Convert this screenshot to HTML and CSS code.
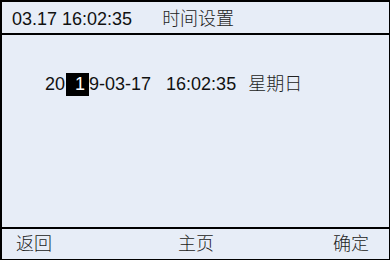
FILE: index.html
```html
<!DOCTYPE html>
<html lang="zh-CN">
<head>
<meta charset="utf-8">
<title>时间设置</title>
<link rel="stylesheet" href="styles.css">
</head>
<body>
<div class="screen">
  <div class="header">
    <span class="clock">03.17 16:02:35</span>
    <span class="title cjk">时间设置</span>
  </div>
  <div class="main">
    <div class="date-row">
      <span class="year">20</span><span class="sel">1</span><span class="rest">9-03-17</span><span class="time">16:02:35</span><span class="week cjk">星期日</span>
    </div>
  </div>
  <div class="footer">
    <span class="btn cjk back">返回</span>
    <span class="btn cjk home">主页</span>
    <span class="btn cjk ok">确定</span>
  </div>
</div>
</body>
</html>
```
FILE: styles.css
```css
html, body {
  margin: 0;
  padding: 0;
  background: #ffffff;
}

body {
  font-family: "Liberation Sans", "Noto Sans CJK SC", sans-serif;
  font-size: 18px;
  color: #111111;
}

.cjk {
  font-weight: 300;
  color: #222222;
}

.screen {
  width: 390px;
  height: 260px;
  box-sizing: border-box;
  border-style: solid;
  border-color: #000000;
  border-width: 2px 1px 1px 2px;
  background: #e7edf7;
  display: flex;
  flex-direction: column;
}

.header {
  height: 33px;
  box-sizing: border-box;
  border-bottom: 2px solid #000000;
  padding: 8px 0 0 10px;
  line-height: 18px;
  display: flex;
  white-space: pre;
}

.title {
  margin-left: 30px;
}

.main {
  flex: 1;
  padding: 38px 0 0 43px;
}

.date-row {
  height: 23px;
  line-height: 23px;
  display: flex;
  white-space: pre;
}

.sel {
  display: inline-block;
  width: 23px;
  height: 23px;
  box-sizing: border-box;
  margin-left: 1px;
  padding-left: 9px;
  background: #000000;
  color: #ffffff;
}

.time {
  margin-left: 15px;
}

.week {
  margin-left: 12px;
}

.footer {
  height: 32px;
  box-sizing: border-box;
  border-top: 2px solid #000000;
  padding: 6px 20px 0 14px;
  line-height: 18px;
  display: flex;
}

.home {
  margin-left: 126px;
}

.ok {
  margin-left: auto;
}
```
